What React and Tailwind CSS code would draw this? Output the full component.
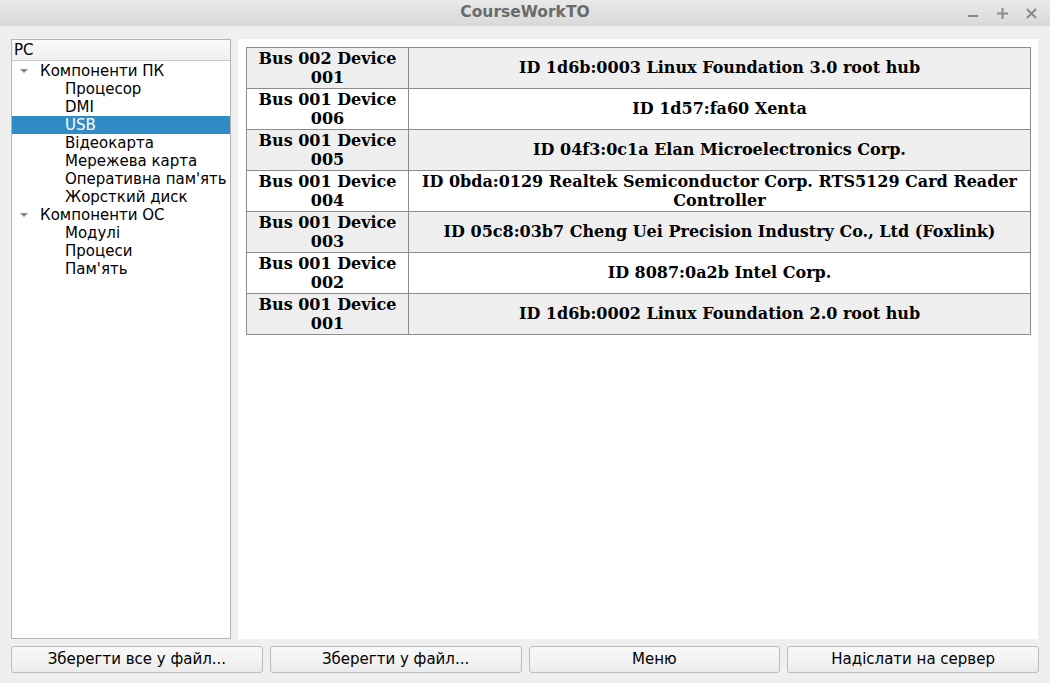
import React from "react";

const tree = [
  { label: "Компоненти ПК", level: 0, open: true },
  { label: "Процесор", level: 1 },
  { label: "DMI", level: 1 },
  { label: "USB", level: 1, selected: true },
  { label: "Відеокарта", level: 1 },
  { label: "Мережева карта", level: 1 },
  { label: "Оперативна пам'ять", level: 1 },
  { label: "Жорсткий диск", level: 1 },
  { label: "Компоненти ОС", level: 0, open: true },
  { label: "Модулі", level: 1 },
  { label: "Процеси", level: 1 },
  { label: "Пам'ять", level: 1 },
];

const devices = [
  ["Bus 002 Device 001", "ID 1d6b:0003 Linux Foundation 3.0 root hub"],
  ["Bus 001 Device 006", "ID 1d57:fa60 Xenta"],
  ["Bus 001 Device 005", "ID 04f3:0c1a Elan Microelectronics Corp."],
  ["Bus 001 Device 004", "ID 0bda:0129 Realtek Semiconductor Corp. RTS5129 Card Reader Controller"],
  ["Bus 001 Device 003", "ID 05c8:03b7 Cheng Uei Precision Industry Co., Ltd (Foxlink)"],
  ["Bus 001 Device 002", "ID 8087:0a2b Intel Corp."],
  ["Bus 001 Device 001", "ID 1d6b:0002 Linux Foundation 2.0 root hub"],
];

const buttons = ["Зберегти все у файл...", "Зберегти у файл...", "Меню", "Надіслати на сервер"];

const App = () => {
  return (
    <div className="w-[1050px] h-[683px] flex flex-col bg-[#efefef] font-['DejaVu_Sans',sans-serif] overflow-hidden">
      {/* title bar */}
      <div className="relative h-[26px] flex items-center justify-center bg-[linear-gradient(to_bottom,#e9e9e9,#d9d9d9)]">
        <span className="text-[15.5px] font-bold text-[#6a6a6a]">CourseWorkTO</span>
        <div className="absolute right-[12px] top-0 h-full flex items-center gap-[16px] text-[#8a8a8a]">
          <svg width="13" height="13" viewBox="0 0 13 13">
            <rect x="1" y="8" width="10" height="2" fill="currentColor" />
          </svg>
          <svg width="13" height="13" viewBox="0 0 13 13">
            <rect x="1" y="5.5" width="11" height="2" fill="currentColor" />
            <rect x="5.5" y="1" width="2" height="11" fill="currentColor" />
          </svg>
          <svg width="13" height="13" viewBox="0 0 13 13">
            <path d="M2 2 L11 11 M11 2 L2 11" stroke="currentColor" strokeWidth="2" />
          </svg>
        </div>
      </div>

      <div className="flex-1 flex gap-[7px] px-[11px] pt-[13px]">
        {/* tree */}
        <div className="w-[220px] h-[600px] flex flex-col border border-[#b4b4b4] bg-white">
          <div className="h-[21px] flex items-center pl-[2px] border-b border-[#c8c8c8] bg-[linear-gradient(to_bottom,#fafafa,#f0f0f0)] text-[15px] text-black">
            PC
          </div>
          <div className="pt-[1px]">
            {tree.map((n) => (
              <div
                key={n.label}
                className={`h-[18px] flex items-center text-[15px] leading-none whitespace-nowrap ${
                  n.selected ? "bg-[#308cc6] text-white" : "text-black"
                } ${n.level === 0 ? "pl-[7px]" : "pl-[53px]"}`}
              >
                {n.level === 0 && (
                  <svg width="10" height="8" viewBox="0 0 10 8" className="mr-[11px]">
                    <path d="M1 2 L9 2 L5 6 Z" fill="#8a8a8a" />
                  </svg>
                )}
                {n.label}
              </div>
            ))}
          </div>
        </div>

        {/* table */}
        <div className="w-[800px] h-[600px] bg-white p-[8px]">
          <table className="w-[785px] border-collapse font-['DejaVu_Serif',serif] font-bold text-[16px] leading-[19px] text-black">
            <tbody>
              {devices.map(([bus, id], i) => (
                <tr key={i} className={i % 2 === 0 ? "bg-[#efefef]" : "bg-white"}>
                  <td className="w-[162px] h-[41px] border border-[#8c8c8c] text-center px-[6px]">{bus}</td>
                  <td className="h-[41px] border border-[#8c8c8c] text-center px-[6px] pb-[1px]">{id}</td>
                </tr>
              ))}
            </tbody>
          </table>
        </div>
      </div>

      {/* buttons */}
      <div className="grid grid-cols-4 gap-[7px] px-[11px] pt-[7px] pb-[10px]">
        {buttons.map((b) => (
          <button
            key={b}
            className="h-[27px] rounded-[3px] border border-[#bcbcbc] bg-[linear-gradient(to_bottom,#f9f9f9,#ececec)] text-[15px] text-black"
          >
            {b}
          </button>
        ))}
      </div>
    </div>
  );
};

export default App;
